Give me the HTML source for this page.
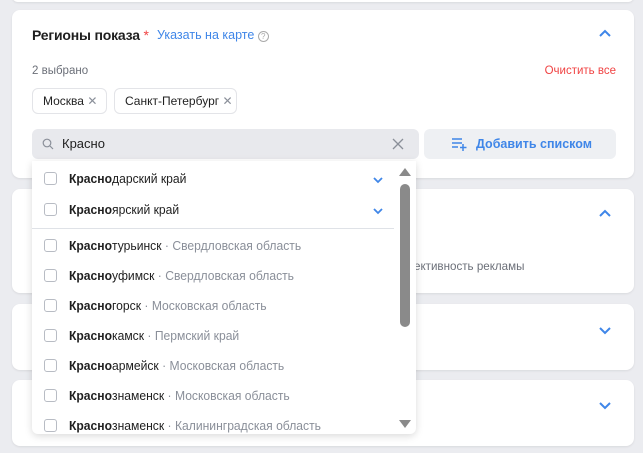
<!DOCTYPE html><html><head><meta charset="utf-8"><style>
*{box-sizing:border-box;margin:0;padding:0}
body{width:643px;height:453px;background:#ebecf0;font-family:"Liberation Sans",sans-serif;position:relative;overflow:hidden;color:#1f1f1f}
.card{position:absolute;left:12px;width:622px;background:#fff;border-radius:8px;box-shadow:0 1px 2px rgba(0,0,0,.08)}
.abs{position:absolute}
.chev{position:absolute;width:14px;height:10px}
.chip{position:absolute;top:88px;height:26px;border:1px solid #e3e4e8;border-radius:6px;font-size:12px;line-height:24px;padding-left:10px}
.row{position:absolute;left:0;width:368px;height:30px;font-size:12.5px;line-height:30px}
.row .cb{position:absolute;left:12px;top:8px;width:13px;height:13px;border:1px solid #b8bcc4;border-radius:3px}
.row .t{position:absolute;left:37px;white-space:nowrap;transform:scaleX(0.97);transform-origin:0 50%}
.g{color:#8a8f99}
</style></head><body>
<div class="card" style="top:-10px;height:12px"></div>
<div class="card" style="top:10px;height:168px">
 <div class="abs" style="left:20px;top:17px;font-size:14px;font-weight:bold;letter-spacing:-.2px">Регионы показа<span style="color:#f04343;font-weight:normal"> *</span></div>
 <div class="abs" style="left:145px;top:18px;font-size:12.5px;color:#3f86e8">Указать на карте <span style="display:inline-block;width:11px;height:11px;border:1px solid #aaa;border-radius:50%;font-size:8px;line-height:9px;text-align:center;color:#aaa;vertical-align:0">?</span></div>
 <svg class="chev" style="left:586px;top:19px" viewBox="0 0 14 10"><path d="M2 7 L7 2 L12 7" fill="none" stroke="#3f86e8" stroke-width="2"/></svg>
 <div class="abs" style="left:20px;top:55px;font-size:11.5px;color:#6b6f78">2 выбрано</div>
 <div class="abs" style="right:18px;top:55px;font-size:11.5px;color:#f04343">Очистить все</div>
 <div class="abs" style="left:20px;top:119px;width:387px;height:30px;background:#e8e9ed;border-radius:6px">
  <svg class="abs" style="left:10px;top:9px" width="12" height="12" viewBox="0 0 12 12"><circle cx="5" cy="5" r="3.8" fill="none" stroke="#8a8f99" stroke-width="1.2"/><path d="M8 8 L11 11" stroke="#8a8f99" stroke-width="1.2"/></svg>
  <div class="abs" style="left:30px;top:7px;font-size:13px">Красно</div>
  <svg class="abs" style="left:360px;top:9px" width="12" height="12" viewBox="0 0 12 12"><path d="M1 1L11 11M11 1L1 11" stroke="#8a8f99" stroke-width="1.3"/></svg>
 </div>
 <div class="abs" style="left:412px;top:119px;width:192px;height:30px;background:#eef0f3;border-radius:6px;color:#3f86e8;font-size:12.5px;font-weight:bold;line-height:30px">
  <svg class="abs" style="left:28px;top:8px" width="16" height="14" viewBox="0 0 16 14"><path d="M0 2H10M0 6H10M0 10H6M11 7V14M8 10.5H14.5" stroke="#3f86e8" stroke-width="1.5" fill="none"/></svg>
  <span style="position:absolute;left:52px">Добавить списком</span></div>
</div>
<div class="chip" style="left:32px;width:75px">Москва <span style="color:#8a8f99">✕</span></div>
<div class="chip" style="left:114px;width:123px">Санкт-Петербург <span style="color:#8a8f99">✕</span></div>
<div class="card" style="top:189px;height:104px">
 <svg class="chev" style="left:586px;top:20px" viewBox="0 0 14 10"><path d="M2 7 L7 2 L12 7" fill="none" stroke="#3f86e8" stroke-width="2"/></svg>
 <div class="abs" style="left:402px;top:71px;font-size:11.6px;color:#6b6f78">ективность рекламы</div>
</div>
<div class="card" style="top:304px;height:66px"><svg class="chev" style="left:586px;top:21px" viewBox="0 0 14 10"><path d="M2 3 L7 8 L12 3" fill="none" stroke="#3f86e8" stroke-width="2"/></svg></div>
<div class="card" style="top:380px;height:66px"><svg class="chev" style="left:586px;top:20px" viewBox="0 0 14 10"><path d="M2 3 L7 8 L12 3" fill="none" stroke="#3f86e8" stroke-width="2"/></svg></div>
<div class="abs" style="left:32px;top:161px;width:384px;height:273px;background:#fff;border-radius:0 0 6px 6px;box-shadow:0 2px 8px rgba(0,0,0,.15);overflow:hidden">
 <div class="row" style="top:3px"><div class="cb"></div><div class="t"><b>Красно</b>дарский край</div><svg class="chev" style="left:339px;top:11px" viewBox="0 0 14 10"><path d="M3 3 L7 7 L11 3" fill="none" stroke="#3f86e8" stroke-width="1.8"/></svg></div>
 <div class="row" style="top:34px"><div class="cb"></div><div class="t"><b>Красно</b>ярский край</div><svg class="chev" style="left:339px;top:11px" viewBox="0 0 14 10"><path d="M3 3 L7 7 L11 3" fill="none" stroke="#3f86e8" stroke-width="1.8"/></svg></div>
 <div class="abs" style="left:0;top:67px;width:362px;height:1px;background:#dfe2e7"></div>
 <div class="row" style="top:70px"><div class="cb"></div><div class="t"><b>Красно</b>турьинск <span class="g">· Свердловская область</span></div></div>
 <div class="row" style="top:100px"><div class="cb"></div><div class="t"><b>Красно</b>уфимск <span class="g">· Свердловская область</span></div></div>
 <div class="row" style="top:130px"><div class="cb"></div><div class="t"><b>Красно</b>горск <span class="g">· Московская область</span></div></div>
 <div class="row" style="top:160px"><div class="cb"></div><div class="t"><b>Красно</b>камск <span class="g">· Пермский край</span></div></div>
 <div class="row" style="top:190px"><div class="cb"></div><div class="t"><b>Красно</b>армейск <span class="g">· Московская область</span></div></div>
 <div class="row" style="top:220px"><div class="cb"></div><div class="t"><b>Красно</b>знаменск <span class="g">· Московская область</span></div></div>
 <div class="row" style="top:250px"><div class="cb"></div><div class="t"><b>Красно</b>знаменск <span class="g">· Калининградская область</span></div></div>
 <svg class="abs" style="left:367px;top:6px" width="12" height="10"><path d="M0 9L6 1L12 9Z" fill="#8a8a8a"/></svg>
 <div class="abs" style="left:368px;top:23px;width:10px;height:143px;background:#8a8a8a;border-radius:5px"></div>
 <svg class="abs" style="left:367px;top:258px" width="12" height="10"><path d="M0 1L6 9L12 1Z" fill="#8a8a8a"/></svg>
</div>
</body></html>
